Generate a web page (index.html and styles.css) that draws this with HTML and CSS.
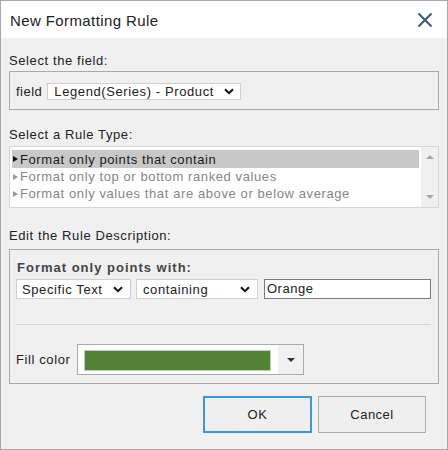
FILE: index.html
```html
<!DOCTYPE html>
<html>
<head>
<meta charset="utf-8">
<link rel="stylesheet" href="styles.css">
</head>
<body>
<div class="window">
  <div class="titlebar">
    <span class="title">New Formatting Rule</span>
    <svg class="close" width="16" height="16" viewBox="0 0 16 16"><path d="M1.5 1.5 L14.5 14.5 M14.5 1.5 L1.5 14.5" stroke="#3f5b86" stroke-width="2.2" fill="none"/></svg>
  </div>
  <div class="content">
    <div class="label l1">Select the field:</div>
    <div class="group g1">
      <span class="fieldlbl">field</span>
      <div class="select sel-field"><span>Legend(Series) - Product</span><svg class="chev" width="10" height="7" viewBox="0 0 10 7"><path d="M1 1.2 L5 5.2 L9 1.2" stroke="#111" stroke-width="2" fill="none"/></svg></div>
    </div>

    <div class="label l2">Select a Rule Type:</div>
    <div class="listbox">
      <div class="rows">
        <div class="row selected"><span class="tri"></span>Format only points that contain</div>
        <div class="row"><span class="tri"></span>Format only top or bottom ranked values</div>
        <div class="row"><span class="tri"></span>Format only values that are above or below average</div>
      </div>
      <div class="scrollbar">
        <span class="arr up"></span>
        <span class="arr down"></span>
      </div>
    </div>

    <div class="label l3">Edit the Rule Description:</div>
    <div class="group g3">
      <div class="bold">Format only points with:</div>
      <div class="controls">
        <div class="select sel1"><span>Specific Text</span><svg class="chev" width="10" height="7" viewBox="0 0 10 7"><path d="M1 1.2 L5 5.2 L9 1.2" stroke="#111" stroke-width="2" fill="none"/></svg></div>
        <div class="select sel2"><span>containing</span><svg class="chev" width="10" height="7" viewBox="0 0 10 7"><path d="M1 1.2 L5 5.2 L9 1.2" stroke="#111" stroke-width="2" fill="none"/></svg></div>
        <div class="input">Orange</div>
      </div>
      <div class="sep"></div>
      <div class="fillrow">
        <span class="filllbl">Fill color</span>
        <div class="picker">
          <div class="swatchwrap"><div class="swatch"></div></div>
          <div class="dd"><span class="ddtri"></span></div>
        </div>
      </div>
    </div>

    <div class="buttons">
      <button class="btn ok">OK</button>
      <button class="btn cancel">Cancel</button>
    </div>
  </div>
</div>
</body>
</html>
```

FILE: styles.css
```css
* { box-sizing: border-box; }
html, body { margin: 0; padding: 0; }
body {
  font-family: "Liberation Sans", Arial, sans-serif;
  font-size: 13px;
  color: #222;
}
.window {
  width: 448px;
  height: 450px;
  border: 1px solid #a8a8a8;
  background: #f0f0f0;
  display: flex;
  flex-direction: column;
}
.titlebar {
  height: 37px;
  background: #fff;
  display: flex;
  align-items: center;
  justify-content: space-between;
  padding: 0 14px 0 9px;
}
.title {
  font-size: 15px;
  letter-spacing: 0.4px;
  color: #222;
  margin-top: 1px;
}
.close { display: block; margin-top: 1px; }
.content {
  padding: 0 8px;
  display: flex;
  flex-direction: column;
}
.label {
  height: 16px;
  line-height: 16px;
  letter-spacing: 0.6px;
  color: #222;
}
.l1 { margin-top: 15px; margin-bottom: 2px; }
.l2 { margin-top: 17px; margin-bottom: 3px; }
.l3 { margin-top: 20px; margin-bottom: 5px; }
.group {
  border: 1px solid #a9a9a9;
}
.g1 {
  height: 39px;
  padding: 11px 6px 0 6px;
  display: flex;
  align-items: flex-start;
}
.fieldlbl {
  line-height: 17px;
  margin-right: 5px;
  letter-spacing: 0.5px;
}
.select {
  background: #fff;
  border: 1px solid #cfcfcf;
  display: flex;
  align-items: center;
  justify-content: space-between;
  letter-spacing: 0.6px;
}
.sel-field {
  width: 194px;
  height: 17px;
  padding: 0 6px 0 6px;
}
.chev { display: block; flex: none; }
.listbox {
  height: 62px;
  background: #fff;
  border: 1px solid #d6d6d6;
  display: flex;
}
.rows {
  flex: 1;
  padding: 3px 2px 0 2px;
}
.row {
  height: 17px;
  line-height: 17px;
  color: #868686;
  display: flex;
  align-items: center;
  letter-spacing: 0.6px;
}
.row.selected {
  height: 18px;
  background: #c8c8c8;
  color: #1a1a1a;
}
.tri {
  width: 0; height: 0;
  border-top: 3.5px solid transparent;
  border-bottom: 3.5px solid transparent;
  border-left: 5px solid #999;
  margin: 0 2px 0 1px;
}
.row.selected .tri { border-left-color: #111; }
.scrollbar {
  width: 17px;
  background: #f0f0f0;
  display: flex;
  flex-direction: column;
  justify-content: space-between;
  align-items: center;
  padding: 8px 0 8px 0;
}
.arr { width: 0; height: 0; border-left: 4px solid transparent; border-right: 4px solid transparent; }
.arr.up { border-bottom: 4px solid #a8a8a8; }
.arr.down { border-top: 4px solid #a8a8a8; }
.g3 {
  height: 135px;
  padding: 10px 7px 0 6px;
  display: flex;
  flex-direction: column;
}
.bold {
  font-weight: bold;
  height: 16px;
  line-height: 16px;
  color: #444;
  letter-spacing: 1px;
  padding-left: 1px;
}
.controls {
  margin-top: 3px;
  display: flex;
  height: 20px;
}
.sel1 { width: 115px; padding: 0 7px 0 5px; }
.sel2 { width: 122px; margin-left: 5px; padding: 0 7px 0 6px; }
.input {
  margin-left: 6px;
  flex: 1;
  background: #fff;
  border: 1px solid #7a7a7a;
  padding-left: 2px;
  line-height: 18px;
  letter-spacing: 0.5px;
}
.sep {
  margin-top: 25px;
  height: 1px;
  background: #d4d4d4;
}
.fillrow {
  margin-top: 19px;
  display: flex;
  align-items: center;
}
.filllbl {
  width: 61px;
  letter-spacing: 0.6px;
}
.picker {
  width: 227px;
  height: 31px;
  background: #fff;
  border: 1px solid #aaa;
  display: flex;
}
.swatchwrap {
  width: 200px;
  padding: 5px 7px 3px 6px;
  background: #fff;
}
.swatch {
  height: 100%;
  background: #548235;
  border: 1px solid #c8c8c8;
}
.dd {
  flex: 1;
  background: #f0f0f0;
  display: flex;
  align-items: center;
  justify-content: center;
}
.ddtri {
  width: 0; height: 0;
  border-left: 4px solid transparent;
  border-right: 4px solid transparent;
  border-top: 4px solid #333;
}
.buttons {
  margin-top: 12px;
  display: flex;
  justify-content: flex-end;
  padding-right: 13px;
  gap: 6px;
}
.btn {
  font-family: "Liberation Sans", Arial, sans-serif;
  font-size: 13px;
  color: #222;
  background: #efefef;
  height: 37px;
  letter-spacing: 0.5px;
  margin: 0;
}
.ok { width: 109px; border: 2px solid #3c97dd; }
.cancel { width: 108px; border: 1px solid #ababab; }
```
